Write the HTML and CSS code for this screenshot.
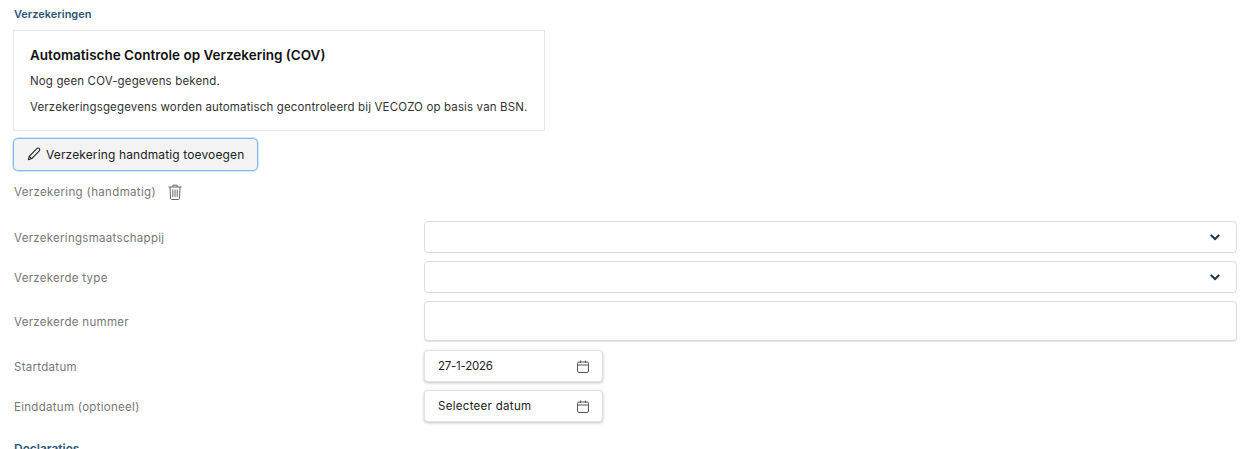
FILE: index.html
```html
<!DOCTYPE html>
<html lang="en">
<head>
    <meta charset="UTF-8">
    <meta name="viewport" content="width=device-width, initial-scale=1.0">
    <title>Verzekeringen</title>
    <link rel="stylesheet" href="styles.css">
</head>
<body>
    <div class="page">
        <h2 class="section-title">Verzekeringen</h2>
        <div class="cov-card">
            <h3>Automatische Controle op Verzekering (COV)</h3>
            <p>Nog geen COV-gegevens bekend.</p>
            <p>Verzekeringsgegevens worden automatisch gecontroleerd bij VECOZO op basis van BSN.</p>
        </div>
        <button class="add-button">
            <svg width="14" height="14" viewBox="0 0 16 16" fill="none" stroke="#222" stroke-width="1.2" stroke-linejoin="round" stroke-linecap="round">
                <path d="M11.2 1.8a1.9 1.9 0 0 1 2.9 2.5L5.4 13.2 1.6 14.5l1-3.9z"/>
                <path d="M2.6 10.6l2.8 2.6"/>
            </svg>
            <span>Verzekering handmatig toevoegen</span>
        </button>
        <div class="manual-head">
            <span>Verzekering (handmatig)</span>
            <svg width="14" height="16" viewBox="0 0 14 16" fill="none" stroke="#666" stroke-width="1">
                <path d="M0.5 3h13M4.8 3V1.2h4.4V3"/>
                <path d="M2 3l.5 11.2c0 .8.5 1.3 1.2 1.3h6.6c.7 0 1.2-.5 1.2-1.3L12 3"/>
                <path d="M4.8 5.5v7.5M7 5.5v7.5M9.2 5.5v7.5"/>
            </svg>
        </div>
        <div class="form">
            <div class="row">
                <label>Verzekeringsmaatschappij</label>
                <div class="field">
                    <svg class="chevron" width="10" height="7" viewBox="0 0 10 7" fill="none" stroke="#1d3557" stroke-width="2"><path d="M.8 1l4.2 4 4.2-4"/></svg>
                </div>
            </div>
            <div class="row">
                <label>Verzekerde type</label>
                <div class="field">
                    <svg class="chevron" width="10" height="7" viewBox="0 0 10 7" fill="none" stroke="#1d3557" stroke-width="2"><path d="M.8 1l4.2 4 4.2-4"/></svg>
                </div>
            </div>
            <div class="row row-input">
                <label>Verzekerde nummer</label>
                <div class="field field-input"></div>
            </div>
            <div class="row">
                <label>Startdatum</label>
                <div class="field field-date">
                    <span class="date-value">27-1-2026</span>
                    <svg width="12" height="13" viewBox="0 0 12 13" fill="none" stroke="#555" stroke-width="1"><rect x=".5" y="2" width="11" height="10.5" rx="1.5"/><path d="M.5 5h11M3.5 .5v2.5M8.5 .5v2.5"/></svg>
                </div>
            </div>
            <div class="row">
                <label>Einddatum (optioneel)</label>
                <div class="field field-date">
                    <span class="date-empty">Selecteer datum</span>
                    <svg width="12" height="13" viewBox="0 0 12 13" fill="none" stroke="#555" stroke-width="1"><rect x=".5" y="2" width="11" height="10.5" rx="1.5"/><path d="M.5 5h11M3.5 .5v2.5M8.5 .5v2.5"/></svg>
                </div>
            </div>
        </div>
        <h2 class="section-title next-section">Declaraties</h2>
    </div>
</body>
</html>
```

FILE: styles.css
```css
body, html {
    margin: 0;
    padding: 0;
    height: 100%;
    overflow: hidden;
    background-color: #fff;
    font-family: Inter, "Open Sans", sans-serif;
    font-size: 11.5px;
    color: #222;
}
.page {
    padding: 7px 8px 0 13px;
}
.section-title {
    margin: 0;
    padding-left: 1px;
    font-size: 11px;
    line-height: 14px;
    font-weight: 600;
    color: #2b5676;
}
.cov-card {
    margin-top: 9px;
    padding: 15px 16px 0;
    box-sizing: border-box;
    width: 532px;
    height: 101px;
    border: 1px solid #e4e9ee;
}
.cov-card h3 {
    margin: 0 0 10px;
    font-size: 13.5px;
    line-height: 18px;
    font-weight: 600;
    color: #111;
}
.cov-card p {
    margin: 0 0 11px;
    font-size: 11.5px;
    line-height: 15px;
    letter-spacing: 0.14px;
    color: #333;
}
.add-button {
    display: flex;
    align-items: center;
    gap: 5px;
    width: 245px;
    height: 33px;
    margin-top: 7px;
    padding: 0 0 1px 13px;
    box-sizing: border-box;
    border: 1px solid #85bdea;
    border-radius: 5px;
    box-shadow: 0 0 0 1px rgba(140,193,234,0.4);
    background-color: #f3f3f3;
    font-family: inherit;
    font-size: 12px;
    letter-spacing: 0.13px;
    color: #222;
}
.manual-head {
    display: flex;
    align-items: center;
    gap: 12px;
    height: 16px;
    margin-top: 13px;
    padding-left: 1px;
    letter-spacing: 0.35px;
    color: #777;
}
.form {
    display: flex;
    flex-direction: column;
    gap: 8px;
    margin-top: 21px;
}
.row {
    display: grid;
    grid-template-columns: 411px 813px;
    align-items: center;
}
.row-input {
    margin-bottom: 1px;
}
.row label {
    padding: 1px 0 0 1px;
    letter-spacing: 0.29px;
    color: #777;
}
.row-input label {
    padding-top: 2px;
}
.field {
    display: flex;
    align-items: center;
    justify-content: flex-end;
    height: 32px;
    padding-right: 16px;
    box-sizing: border-box;
    border: 1px solid #dcdcdc;
    border-radius: 4px;
    background-color: #fff;
}
.field-input {
    height: 40px;
    box-shadow: 0 1px 1px rgba(0,0,0,0.12);
}
.field-date {
    justify-content: space-between;
    width: 179px;
    padding: 0 13px 0 13px;
    border-color: #e2e2e2;
    box-shadow: 0 1px 3px rgba(0,0,0,0.25);
    color: #222;
}
.date-value {
    letter-spacing: -0.25px;
}
.date-empty {
    letter-spacing: 0.3px;
}
.next-section {
    margin-top: 20px;
    font-size: 12px;
}
```
